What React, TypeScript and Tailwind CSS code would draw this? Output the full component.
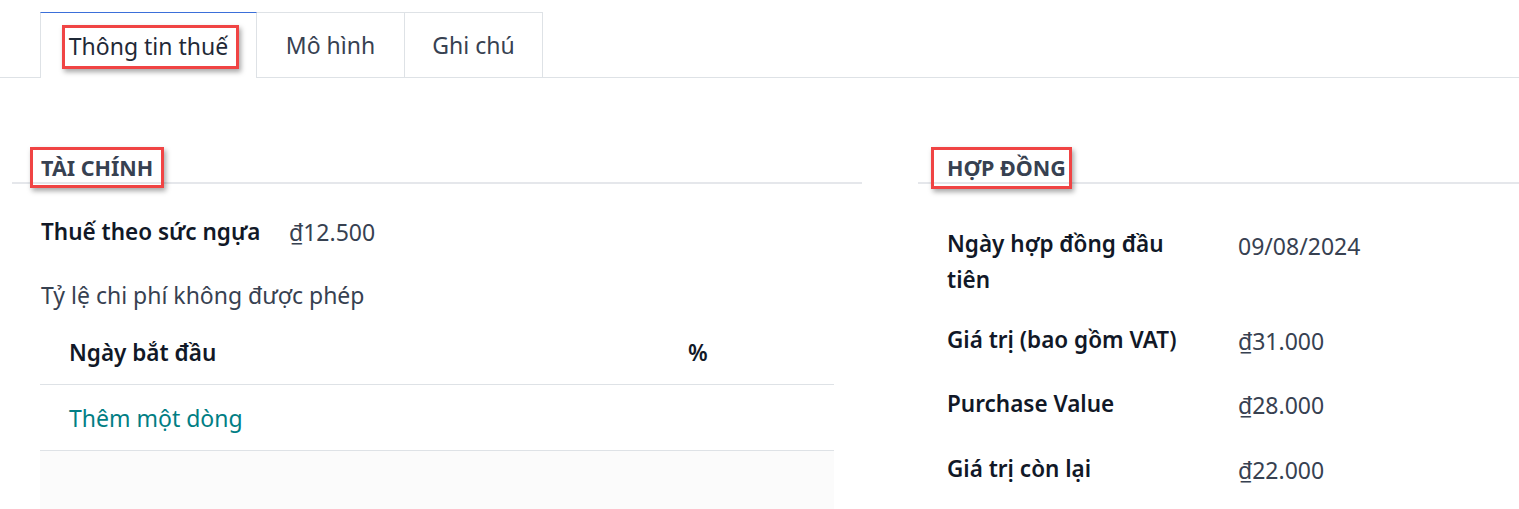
import React from "react";

const font = { fontFamily: '"Noto Sans", "Open Sans", sans-serif' };

function Marked({ children, box }: { children: React.ReactNode; box: string }) {
  return (
    <span className="relative inline-block">
      {children}
      <span
        className={`pointer-events-none absolute border-[3px] border-[#f04444] shadow-[2px_3px_5px_rgba(0,0,0,0.35)] ${box}`}
      />
    </span>
  );
}

export default function App() {
  return (
    <div
      className="relative h-[509px] w-[1519px] overflow-hidden bg-white text-[23px] leading-[32px] text-[#111827]"
      style={font}
    >
      {/* Tabs */}
      <div className="flex h-[78px] items-end border-b border-[#dee2e6] pl-[40px]">
        <div className="-mb-px flex h-[66px] w-[217px] items-center justify-center border border-b-0 border-[#dee2e6] border-t-[#3b6fd9] bg-white text-[#1f2937]">
          <Marked box="-left-[7px] -right-[11px] -top-[5px] -bottom-[7px]">Thông tin thuế</Marked>
        </div>
        <div className="flex h-[65px] w-[148px] items-center justify-center border border-l-0 border-b-0 border-[#dee2e6] text-[#374151]">
          Mô hình
        </div>
        <div className="flex h-[65px] w-[138px] items-center justify-center border border-l-0 border-b-0 border-[#dee2e6] text-[#374151]">
          Ghi chú
        </div>
      </div>

      <div className="flex pt-[70px]">
        {/* Left column */}
        <div className="ml-[12px] w-[850px]">
          <div className="flex h-[36px] items-center border-b-2 border-[#e5e7eb] pl-[29px] pt-[5px]">
            <Marked box="-left-[11px] -right-[11px] -top-[7px] -bottom-[6px]">
              <span className="block text-[21.5px] font-bold uppercase leading-[28px] text-[#374151]">Tài chính</span>
            </Marked>
          </div>
          <div className="flex h-[76px] items-center pl-[29px] pt-[20px]">
            <div className="w-[248px] text-[22.5px] font-semibold">Thuế theo sức ngựa</div>
            <div className="text-[#374151]">₫12.500</div>
          </div>
          <div className="flex h-[70px] items-center pl-[29px] text-[#374151]">
            Tỷ lệ chi phí không được phép
          </div>
          <div className="ml-[28px] w-[794px]">
            <div className="flex h-[55px] items-center border-b border-[#dee2e6] pb-[8px] text-[22.5px]">
              <div className="w-[648px] pl-[29px] font-semibold">Ngày bắt đầu</div>
              <div className="font-semibold">%</div>
            </div>
            <div className="flex h-[66px] items-center border-b border-[#dee2e6] pl-[29px] text-[#017e84]">
              Thêm một dòng
            </div>
            <div className="h-[60px] bg-[#fbfbfb]" />
          </div>
        </div>

        {/* Right column */}
        <div className="ml-[56px] flex-1">
          <div className="flex h-[36px] items-center border-b-2 border-[#e5e7eb] pl-[29px] pt-[5px]">
            <Marked box="-left-[16px] -right-[6px] -top-[7px] -bottom-[7px]">
              <span className="block text-[21.5px] font-bold uppercase leading-[28px] text-[#374151]">Hợp đồng</span>
            </Marked>
          </div>
          <div className="pl-[29px] pt-[42px] leading-[36px]">
            <div className="flex">
              <div className="w-[291px] pr-[40px] text-[22.5px] font-semibold">Ngày hợp đồng đầu tiên</div>
              <div className="pt-[2px] text-[#374151]">09/08/2024</div>
            </div>
            <div className="mt-[24px] flex">
              <div className="w-[291px] text-[22.5px] font-semibold">Giá trị (bao gồm VAT)</div>
              <div className="pt-[1px] text-[#374151]">₫31.000</div>
            </div>
            <div className="mt-[27px] flex">
              <div className="w-[291px] text-[22.5px] font-semibold">Purchase Value</div>
              <div className="pt-[1px] text-[#374151]">₫28.000</div>
            </div>
            <div className="mt-[28px] flex">
              <div className="w-[291px] text-[22.5px] font-semibold">Giá trị còn lại</div>
              <div className="pt-[1px] text-[#374151]">₫22.000</div>
            </div>
          </div>
        </div>
      </div>
    </div>
  );
}
